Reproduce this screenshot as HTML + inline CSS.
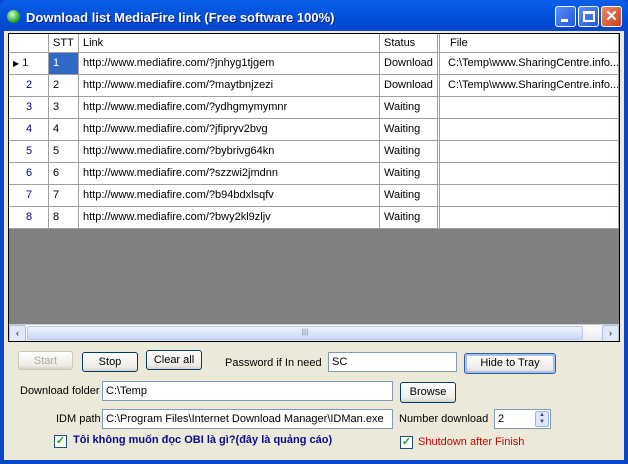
<!DOCTYPE html><html><head><style>
*{box-sizing:border-box;margin:0;padding:0}
body{width:628px;height:464px;overflow:hidden;background:#0a46d8;font-family:"Liberation Sans",sans-serif;font-size:11px;position:relative}
.win{position:absolute;left:0;top:0;width:628px;height:464px;background:linear-gradient(#0a5fe8,#0456e0 10px,#0348d0 26px,#0a46c8 30px);border-radius:7px 7px 0 0}
.title{position:absolute;left:26px;top:10px;color:#fff;font-weight:bold;font-size:13px;text-shadow:1px 1px #0a1e8c}
.ico{position:absolute;left:7px;top:10px;width:13px;height:13px;border-radius:50%;background:radial-gradient(circle at 40% 35%,#cfc,#3a3 60%,#060)}
.tb{position:absolute;top:6px;width:21px;height:21px;border:1px solid #fff;border-radius:3px;background:linear-gradient(135deg,#5a8cf8,#2458e0)}
.client{position:absolute;left:4px;top:31px;width:620px;height:429px;background:#ece9d8}
.grid{position:absolute;left:4px;top:2px;width:612px;height:309px;border:1px solid #000;background:#808080;overflow:hidden}
.row{position:absolute;left:0;width:610px;height:22px;background:#fff;border-bottom:1px solid #a0a0a0}
.c{position:absolute;top:0;height:100%;border-right:1px solid #a0a0a0;padding:4px 0 0 4px;white-space:nowrap;overflow:hidden}
.hdr .c{padding-top:3px}
.sb{position:absolute;left:0;top:290px;width:610px;height:17px;background:linear-gradient(#fff,#e8e8f0);border-top:1px solid #ccc}
.arr{position:absolute;top:0;width:17px;height:17px;border:1px solid #b0c0e8;border-radius:2px;background:#e0e8fa;font-size:9px;text-align:center;line-height:15px}
.btn{position:absolute;border:1px solid #003c74;border-radius:3px;background:linear-gradient(#fff,#ecebe6 80%,#d6d0c5);text-align:center;font-size:11px;line-height:18px;white-space:nowrap}
.inp{position:absolute;background:#fff;border:1px solid #7f9db9;padding:3px 3px;font-size:11px;white-space:nowrap;overflow:hidden}
.lbl{position:absolute;font-size:11px;white-space:nowrap}
.chk{position:absolute;width:13px;height:13px;border:1px solid #1c5180;background:#fff;color:#21a121;font-size:11px;line-height:11px;text-align:center;font-weight:bold}
</style></head><body><div class="win">
<div class="ico"></div><div class="title">Download list MediaFire link (Free software 100%)</div>
<div class="tb" style="left:555px"><div style="position:absolute;left:5px;top:12px;width:7px;height:3px;background:#fff"></div></div>
<div class="tb" style="left:578px"><div style="position:absolute;left:4px;top:4px;width:12px;height:11px;border:2px solid #fff;border-top-width:3px"></div></div>
<div class="tb" style="left:601px;background:linear-gradient(135deg,#e88a6a,#c8401a);color:#fff;font-weight:bold;font-size:15px;text-align:center;line-height:19px">✕</div>
<div class="client">
<div class="grid">
<div class="row hdr" style="top:0;height:19px"><div class="c" style="left:0;width:40px"></div><div class="c" style="left:40px;width:30px">STT</div><div class="c" style="left:70px;width:301px">Link</div><div class="c" style="left:371px;width:60px;border-right:3px double #a0a0a0">Status</div><div class="c" style="left:435px;width:175px;padding-left:6px">File</div></div>
<div id="rows"></div>
<div class="sb"><div class="arr" style="left:0">‹</div><div style="position:absolute;left:18px;top:1px;width:556px;height:14px;border:1px solid #b8c8f0;border-radius:2px;background:linear-gradient(#f0f4ff,#c8d6f8);text-align:center;font-size:7px;line-height:12px;color:#889">||||</div><div class="arr" style="left:593px">›</div></div>
</div>
<div class="btn" style="left:14px;top:320px;width:55px;height:19px;color:#aca899;border-color:#c9c7ba">Start</div>
<div class="btn" style="left:78px;top:321px;width:56px;height:20px">Stop</div>
<div class="btn" style="left:142px;top:319px;width:56px;height:20px">Clear all</div>
<div class="lbl" style="left:221px;top:326px">Password if In need</div>
<div class="inp" style="left:324px;top:321px;width:129px;height:20px">SC</div>
<div class="btn" style="left:460px;top:322px;width:92px;height:21px;border-color:#2c5ca8;box-shadow:inset 0 0 0 2px #a8c0f0">Hide to Tray</div>
<div class="lbl" style="left:16px;top:354px">Download folder</div>
<div class="inp" style="left:98px;top:350px;width:291px;height:20px">C:\Temp</div>
<div class="btn" style="left:396px;top:351px;width:56px;height:21px">Browse</div>
<div class="lbl" style="left:52px;top:382px">IDM path</div>
<div class="inp" style="left:98px;top:378px;width:291px;height:20px">C:\Program Files\Internet Download Manager\IDMan.exe</div>
<div class="lbl" style="left:395px;top:382px">Number download</div>
<div class="inp" style="left:490px;top:378px;width:57px;height:20px">2</div>
<div style="position:absolute;left:531px;top:380px;width:14px;height:16px;border:1px solid #a0b4e0;border-radius:2px;background:#dde6fa;font-size:6px;line-height:7px;text-align:center;color:#445">▲<br>▼</div>
<div class="chk" style="left:50px;top:404px">✓</div>
<div class="lbl" style="left:69px;top:403px;color:#0a0a8c;font-weight:bold">Tôi không muốn đọc OBI là gì?(đây là quảng cáo)</div>
<div class="chk" style="left:396px;top:405px">✓</div>
<div class="lbl" style="left:414px;top:405px;color:#c80000">Shutdown after Finish</div>
</div></div>
<script>
var d=[["jnhyg1tjgem","Download",1],["maytbnjzezi","Download",1],["ydhgmymymnr","Waiting"],["jfipryv2bvg","Waiting"],["bybrivg64kn","Waiting"],["szzwi2jmdnn","Waiting"],["b94bdxlsqfv","Waiting"],["bwy2kl9zljv","Waiting"]],h="";
d.forEach(function(r,i){var t=19+i*22;h+='<div class="row" style="top:'+t+'px"><div class="c" style="left:0;width:40px;color:#00008b;padding-left:'+(i?17:4)+'px">'+(i?'':'<span style="font-size:8px;color:#000">▶</span> ')+(i+1)+'</div><div class="c" style="left:40px;width:30px;'+(i?'':'background:#316ac5;color:#fff')+'">'+(i+1)+'</div><div class="c" style="left:70px;width:301px">http://www.mediafire.com/?'+r[0]+'</div><div class="c" style="left:371px;width:60px;border-right:3px double #a0a0a0">'+r[1]+'</div><div class="c" style="left:435px;width:175px;padding-left:4px">'+(r[2]?'C:\\Temp\\www.SharingCentre.info...':'')+'</div></div>'});
document.getElementById('rows').innerHTML=h;
</script></body></html>
